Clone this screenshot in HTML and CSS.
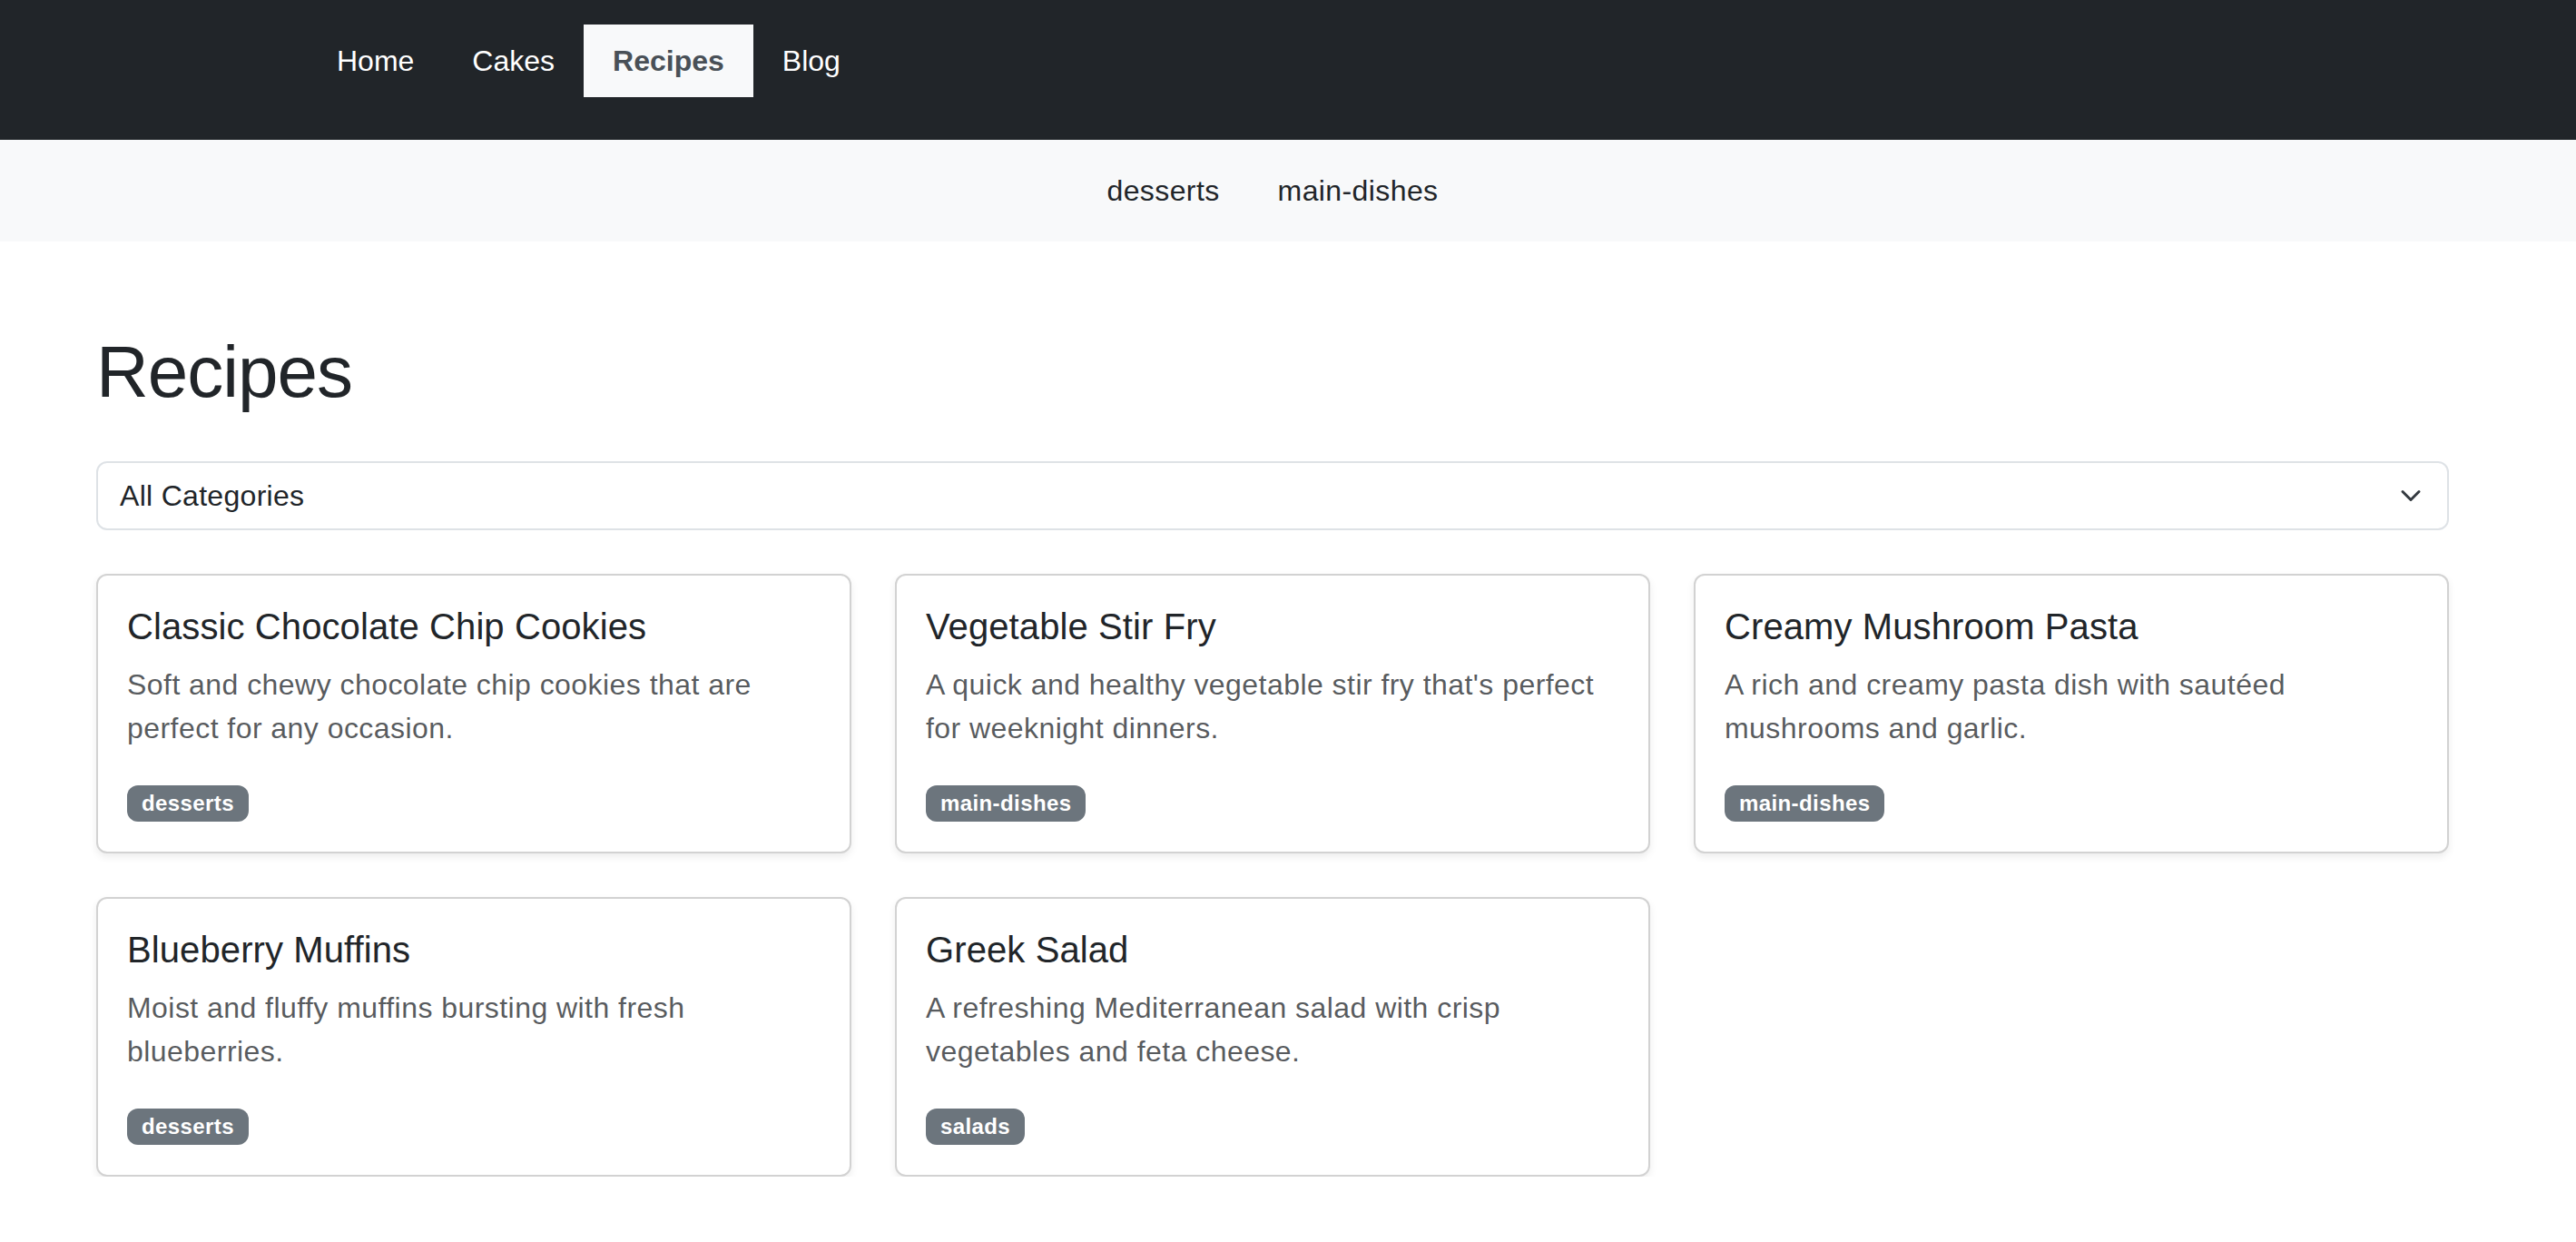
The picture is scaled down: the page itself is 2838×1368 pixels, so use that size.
FILE: index.html
```html
<!DOCTYPE html>
<html lang="en">
<head>
<meta charset="utf-8">
<title>Recipes</title>
<link rel="stylesheet" href="styles.css">
</head>
<body>
  <nav class="navbar">
    <ul class="nav-links">
      <li><a class="nav-link" href="#">Home</a></li>
      <li><a class="nav-link" href="#">Cakes</a></li>
      <li><a class="nav-link active" href="#">Recipes</a></li>
      <li><a class="nav-link" href="#">Blog</a></li>
    </ul>
  </nav>
  <div class="subnav">
    <a class="sub-link" href="#">desserts</a>
    <a class="sub-link" href="#">main-dishes</a>
  </div>
  <main class="container">
    <h1 class="page-title">Recipes</h1>
    <div class="select">
      <span class="select-text">All Categories</span>
      <svg class="chevron" viewBox="0 0 16 16" width="24" height="24" aria-hidden="true"><path d="m2 5 6 6 6-6" fill="none" stroke="#343a40" stroke-width="2" stroke-linecap="round" stroke-linejoin="round"/></svg>
    </div>
    <div class="grid">
      <div class="card">
        <h5 class="card-title">Classic Chocolate Chip Cookies</h5>
        <p class="card-text">Soft and chewy chocolate chip cookies that are perfect for any occasion.</p>
        <div class="tags"><span class="badge">desserts</span></div>
      </div>
      <div class="card">
        <h5 class="card-title">Vegetable Stir Fry</h5>
        <p class="card-text">A quick and healthy vegetable stir fry that's perfect for weeknight dinners.</p>
        <div class="tags"><span class="badge">main-dishes</span></div>
      </div>
      <div class="card">
        <h5 class="card-title">Creamy Mushroom Pasta</h5>
        <p class="card-text">A rich and creamy pasta dish with sautéed mushrooms and garlic.</p>
        <div class="tags"><span class="badge">main-dishes</span></div>
      </div>
      <div class="card">
        <h5 class="card-title">Blueberry Muffins</h5>
        <p class="card-text">Moist and fluffy muffins bursting with fresh blueberries.</p>
        <div class="tags"><span class="badge">desserts</span></div>
      </div>
      <div class="card">
        <h5 class="card-title">Greek Salad</h5>
        <p class="card-text">A refreshing Mediterranean salad with crisp vegetables and feta cheese.</p>
        <div class="tags"><span class="badge">salads</span></div>
      </div>
    </div>
  </main>
</body>
</html>
```
FILE: styles.css
```css
* { box-sizing: border-box; }
html, body { margin: 0; padding: 0; background: #fff; }
body {
  font-family: "Liberation Sans", Arial, Helvetica, sans-serif;
  color: #212529;
  font-size: 32px;
  line-height: 48px;
}
a { text-decoration: none; }

.navbar {
  background: #212529;
  height: 154px;
  padding: 27px 0 0 339px;
}
.nav-links {
  list-style: none;
  margin: 0;
  padding: 0;
  display: flex;
}
.nav-link {
  display: block;
  padding: 16px 32px;
  color: #fff;
  font-size: 32px;
  line-height: 48px;
}
.nav-link.active {
  background: #f8f9fa;
  color: #495057;
  font-weight: 700;
}

.subnav {
  background: #f8f9fa;
  height: 112px;
  padding: 32px 34px 32px 0;
  display: flex;
  justify-content: center;
}
.sub-link {
  color: #212529;
  padding: 0 32px;
  font-size: 32px;
  line-height: 48px;
  letter-spacing: 0.4px;
}

.container {
  width: 2592px;
  margin-left: 106px;
  padding-top: 96px;
}
.page-title {
  font-size: 80px;
  line-height: 96px;
  font-weight: 500;
  margin: 0 0 50px;
  letter-spacing: -1px;
}
.select {
  height: 76px;
  border: 2px solid #dee2e6;
  border-radius: 12px;
  padding: 0 28px 0 24px;
  display: flex;
  align-items: center;
  justify-content: space-between;
  margin-bottom: 48px;
}
.select-text { font-size: 32px; line-height: 48px; letter-spacing: 0.3px; }
.chevron { display: block; width: 24px; height: 24px; }

.grid {
  display: grid;
  grid-template-columns: repeat(3, 1fr);
  gap: 48px 48px;
}
.card {
  border: 2px solid rgba(0, 0, 0, 0.175);
  border-radius: 12px;
  box-shadow: 0 4px 8px rgba(0, 0, 0, 0.075);
  padding: 32px;
  background: #fff;
}
.card-title {
  font-size: 40px;
  line-height: 48px;
  font-weight: 500;
  margin: 0 0 16px;
  color: #212529;
  letter-spacing: 0.1px;
}
.card-text {
  margin: 0 0 32px;
  color: rgba(33, 37, 41, 0.75);
  font-size: 32px;
  line-height: 48px;
  letter-spacing: 0.45px;
}
.tags { line-height: 48px; height: 48px; }
.badge {
  display: inline-block;
  background: #6c757d;
  color: #fff;
  font-size: 24px;
  font-weight: 700;
  line-height: 1;
  padding: 8px 16px;
  border-radius: 12px;
  vertical-align: middle;
  letter-spacing: 0.4px;
}
```
